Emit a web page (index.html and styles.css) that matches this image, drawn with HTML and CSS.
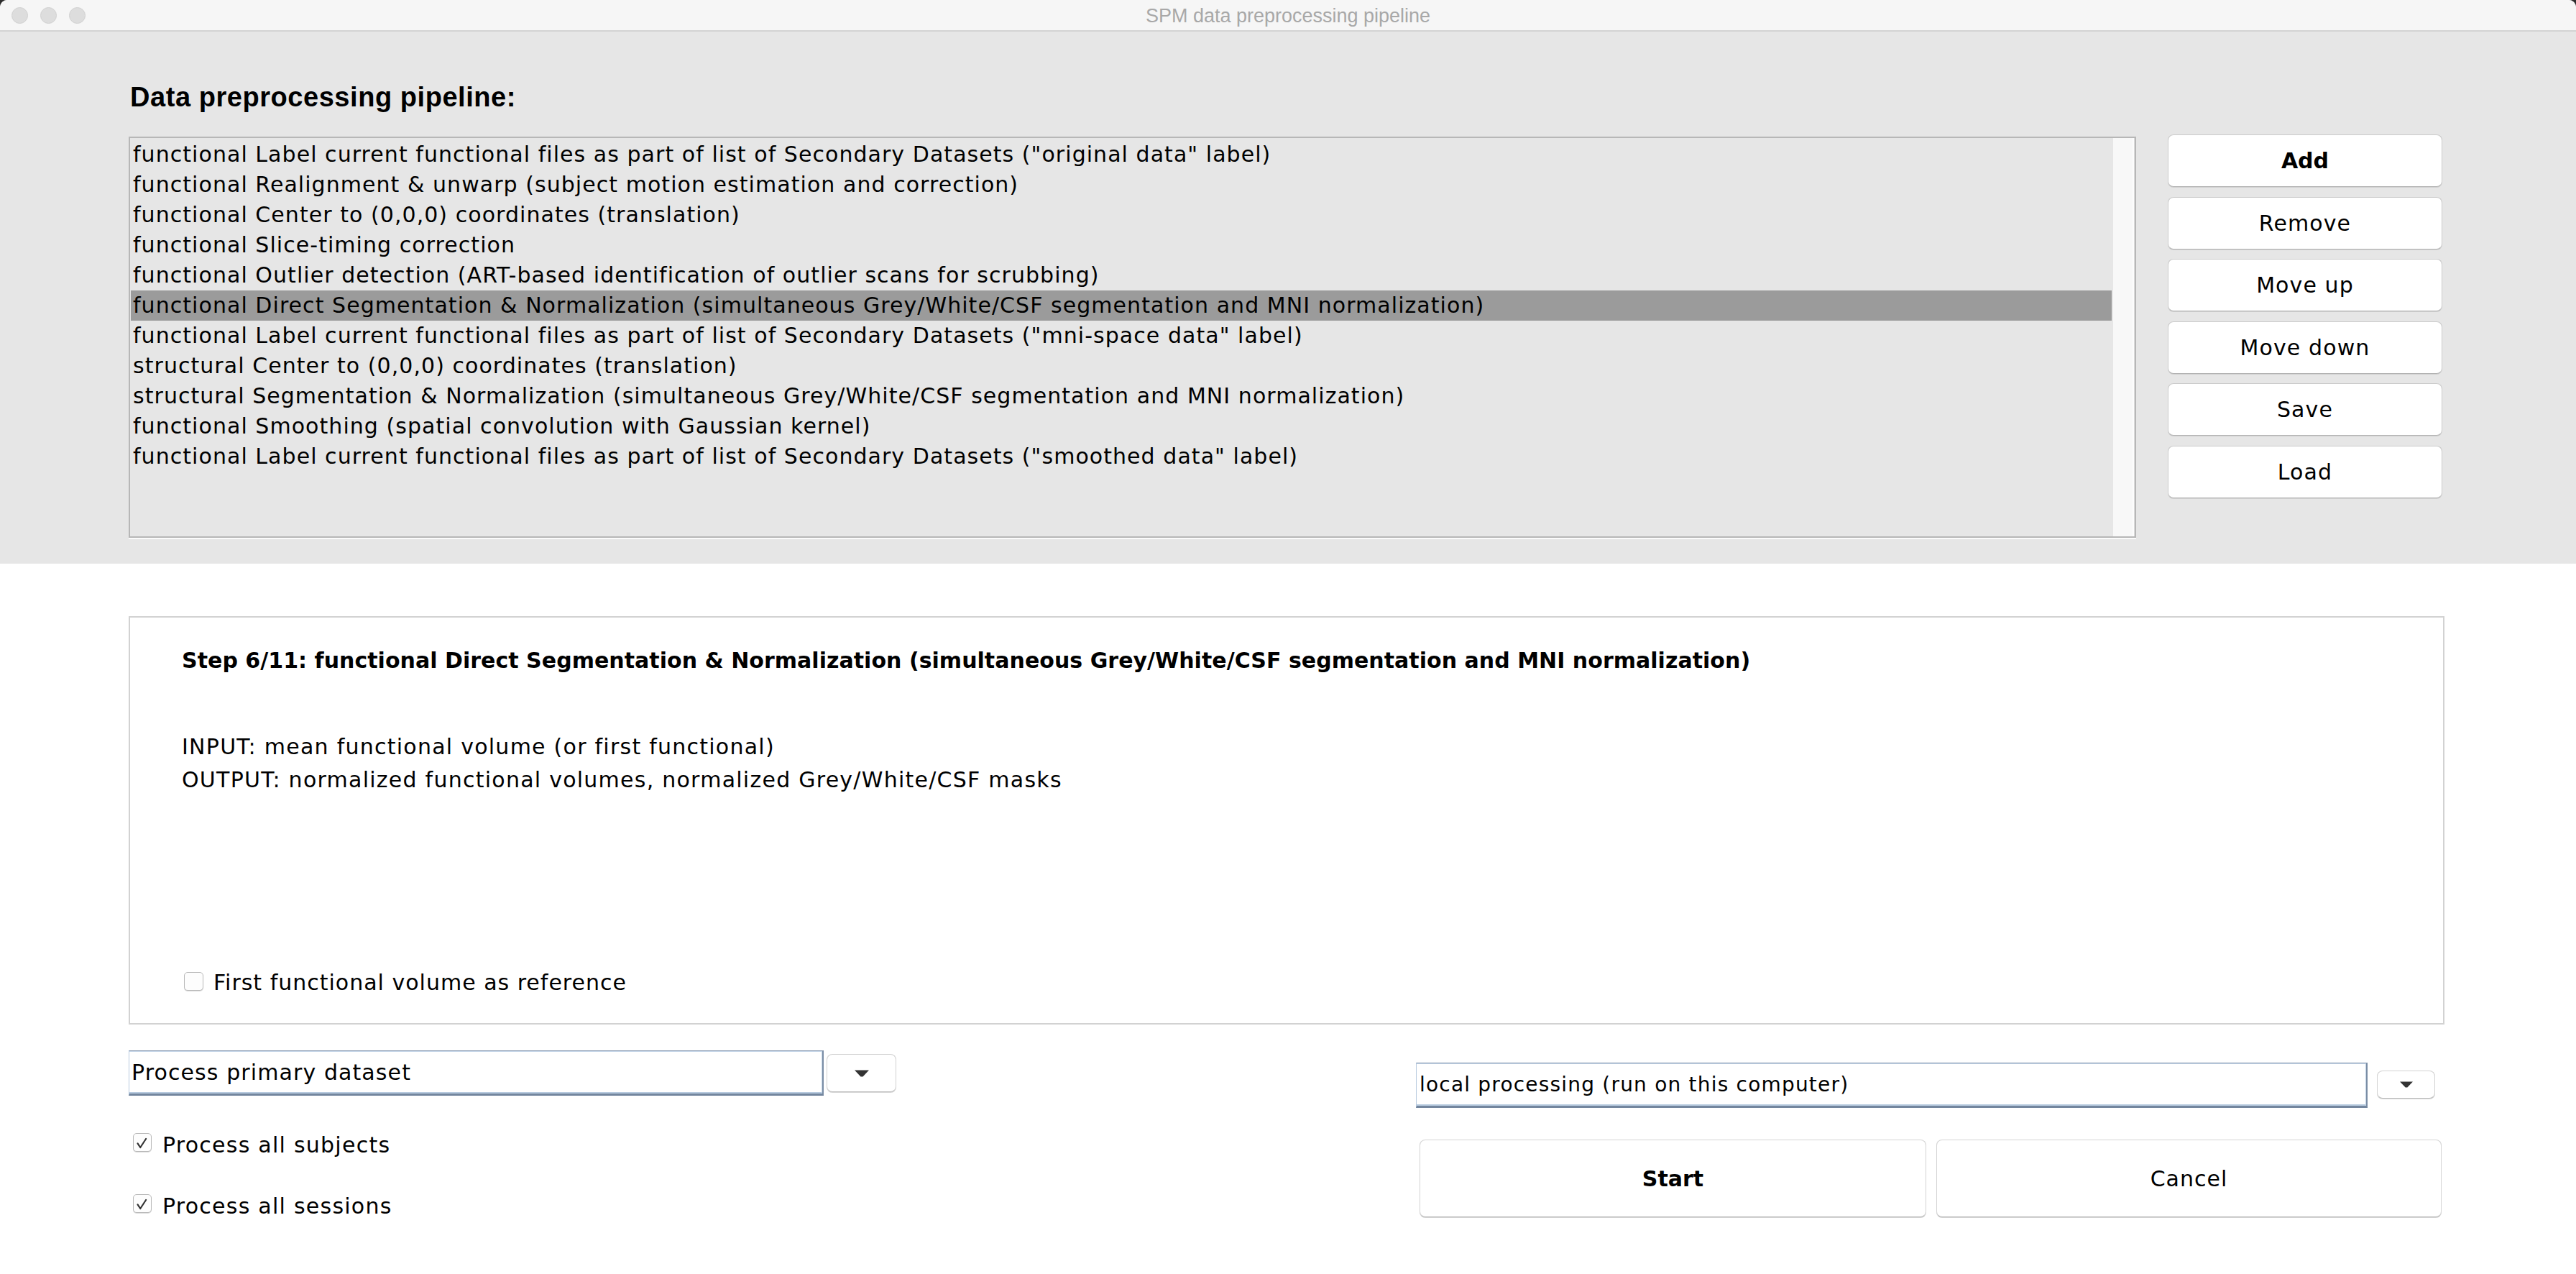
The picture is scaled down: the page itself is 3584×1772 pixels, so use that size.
FILE: index.html
```html
<!DOCTYPE html>
<html lang="en">
<head>
<meta charset="utf-8">
<title>SPM data preprocessing pipeline</title>
<link rel="stylesheet" href="styles.css">
</head>
<body>
<div class="window">
  <div class="titlebar">
    <div class="lights">
      <span class="light"></span><span class="light"></span><span class="light"></span>
    </div>
    <div class="title">SPM data preprocessing pipeline</div>
    <div class="titlebar-spacer"></div>
  </div>

  <div class="top-panel">
    <h1 class="panel-heading">Data preprocessing pipeline:</h1>
    <div class="pipeline-row">
      <div class="listbox">
        <div class="list-items">
          <div class="list-row">functional Label current functional files as part of list of Secondary Datasets ("original data" label)</div>
          <div class="list-row">functional Realignment &amp; unwarp (subject motion estimation and correction)</div>
          <div class="list-row">functional Center to (0,0,0) coordinates (translation)</div>
          <div class="list-row">functional Slice-timing correction</div>
          <div class="list-row">functional Outlier detection (ART-based identification of outlier scans for scrubbing)</div>
          <div class="list-row selected">functional Direct Segmentation &amp; Normalization (simultaneous Grey/White/CSF segmentation and MNI normalization)</div>
          <div class="list-row">functional Label current functional files as part of list of Secondary Datasets ("mni-space data" label)</div>
          <div class="list-row">structural Center to (0,0,0) coordinates (translation)</div>
          <div class="list-row">structural Segmentation &amp; Normalization (simultaneous Grey/White/CSF segmentation and MNI normalization)</div>
          <div class="list-row">functional Smoothing (spatial convolution with Gaussian kernel)</div>
          <div class="list-row">functional Label current functional files as part of list of Secondary Datasets ("smoothed data" label)</div>
        </div>
        <div class="scrolltrack"></div>
      </div>
      <div class="side-buttons">
        <button class="side-btn bold">Add</button>
        <button class="side-btn">Remove</button>
        <button class="side-btn">Move up</button>
        <button class="side-btn">Move down</button>
        <button class="side-btn">Save</button>
        <button class="side-btn">Load</button>
      </div>
    </div>
  </div>

  <div class="bottom-panel">
    <div class="step-box">
      <div class="step-title">Step 6/11: functional Direct Segmentation &amp; Normalization (simultaneous Grey/White/CSF segmentation and MNI normalization)</div>
      <div class="step-desc">
        <div>INPUT: mean functional volume (or first functional)</div>
        <div>OUTPUT: normalized functional volumes, normalized Grey/White/CSF masks</div>
      </div>
      <div class="check-row step-check">
        <span class="checkbox"></span>
        <span class="check-label">First functional volume as reference</span>
      </div>
    </div>

    <div class="controls">
      <div class="controls-left">
        <div class="combo-row">
          <div class="combo combo-lg">Process primary dataset</div>
          <button class="arrow-btn arrow-lg">
            <svg class="arrow-icon" width="20" height="10" viewBox="0 0 20 10"><polygon points="0,0.5 20,0.5 11.5,9.5 8.5,9.5" fill="#333"/></svg>
          </button>
        </div>
        <div class="check-row opt-check first">
          <span class="checkbox checked">
            <svg width="26" height="26" viewBox="0 0 26 26"><polyline points="6,13.5 10,19.5 18.5,6.5" fill="none" stroke="#333" stroke-width="2.4" stroke-linecap="round" stroke-linejoin="round"/></svg>
          </span>
          <span class="check-label">Process all subjects</span>
        </div>
        <div class="check-row opt-check second">
          <span class="checkbox checked">
            <svg width="26" height="26" viewBox="0 0 26 26"><polyline points="6,13.5 10,19.5 18.5,6.5" fill="none" stroke="#333" stroke-width="2.4" stroke-linecap="round" stroke-linejoin="round"/></svg>
          </span>
          <span class="check-label">Process all sessions</span>
        </div>
      </div>

      <div class="controls-right">
        <div class="combo-row right">
          <div class="combo combo-sm">local processing (run on this computer)</div>
          <button class="arrow-btn arrow-sm">
            <svg class="arrow-icon" width="18" height="9" viewBox="0 0 18 9"><polygon points="0,0.5 18,0.5 10.3,8.5 7.7,8.5" fill="#333"/></svg>
          </button>
        </div>
        <div class="action-buttons">
          <button class="action-btn start bold">Start</button>
          <button class="action-btn cancel">Cancel</button>
        </div>
      </div>
    </div>
  </div>
</div>
</body>
</html>
```

FILE: styles.css
```css
* {
  box-sizing: border-box;
}

html {
  background: #2e2e2e;
}

body {
  margin: 0;
  font-family: "DejaVu Sans", "Liberation Sans", sans-serif;
  color: #000;
}

.window {
  width: 3584px;
  height: 1772px;
  background: #fff;
  border-radius: 10px 10px 0 0;
  overflow: hidden;
  display: flex;
  flex-direction: column;
}

/* ---------- title bar ---------- */
.titlebar {
  height: 44px;
  flex: none;
  background: #f6f6f6;
  border-bottom: 2px solid #d3d3d3;
  display: grid;
  grid-template-columns: 1fr auto 1fr;
  align-items: center;
}

.lights {
  display: flex;
  gap: 17px;
  padding-left: 16px;
  padding-bottom: 1px;
}

.light {
  width: 23px;
  height: 23px;
  border-radius: 50%;
  background: #dddddd;
  border: 1px solid #d0d0d0;
}

.title {
  font-family: "Liberation Sans", Arial, sans-serif;
  font-size: 27px;
  line-height: 42px;
  color: #a8a8a8;
  padding-top: 1px;
}

/* ---------- top panel ---------- */
.top-panel {
  flex: none;
  height: 740px;
  background: #e6e6e6;
  padding: 69px 0 0 179px;
}

.panel-heading {
  margin: 0 0 30px 2px;
  font-family: "Liberation Sans", Arial, sans-serif;
  font-weight: bold;
  font-size: 38px;
  line-height: 44px;
  letter-spacing: 0.55px;
}

.pipeline-row {
  display: flex;
  align-items: flex-start;
  gap: 44px;
}

.listbox {
  width: 2793px;
  height: 558px;
  margin-top: 3px;
  border: 2px solid #b7b7b7;
  box-shadow: 0 2px 0 #fbfbfb;
  background: #e6e6e6;
  display: flex;
}

.list-items {
  flex: 1;
  padding: 2px 0 0 1px;
  overflow: hidden;
}

.list-row {
  height: 42px;
  line-height: 42px;
  padding-left: 3px;
  font-size: 30px;
  letter-spacing: 1.05px;
  white-space: nowrap;
}

.list-row.selected {
  background: #9b9b9b;
}

.scrolltrack {
  width: 30px;
  margin-left: 2px;
  background: #f8f8f8;
  border-right: 1px solid #dedede;
  box-shadow: inset -2px 0 0 #fdfdfd;
}

.side-buttons {
  width: 382px;
  display: flex;
  flex-direction: column;
  gap: 13.6px;
}

.side-btn {
  height: 73px;
  background: #fff;
  border: 1px solid #cbcbcb;
  border-bottom-color: #b3b3b3;
  border-radius: 8px;
  box-shadow: 0 1px 0 #cfcfcf;
  font-family: "DejaVu Sans", "Liberation Sans", sans-serif;
  font-size: 30px;
  letter-spacing: 1.1px;
  color: #000;
  padding: 0;
}

.bold {
  font-weight: bold;
  letter-spacing: 0;
}

/* ---------- bottom panel ---------- */
.bottom-panel {
  flex: 1;
  background: #fff;
  padding: 73px 183px 0 179px;
}

.step-box {
  height: 568px;
  border: 2px solid #d2d2d2;
  padding: 42px 0 38px 72px;
  display: flex;
  flex-direction: column;
}

.step-title {
  font-weight: bold;
  font-size: 30px;
  line-height: 36px;
  letter-spacing: 0.03px;
  white-space: nowrap;
}

.step-desc {
  margin-top: 79px;
  font-size: 30px;
  line-height: 45.5px;
  letter-spacing: 1.25px;
}

.check-row {
  display: flex;
  align-items: flex-start;
  font-size: 30px;
  line-height: 36px;
  letter-spacing: 1px;
}

.opt-check {
  letter-spacing: 1.25px;
}

.step-check {
  margin-top: auto;
}

.checkbox {
  flex: none;
  width: 27px;
  height: 26px;
  border: 1px solid #b8b8b8;
  border-radius: 5px;
  background: #fdfdfd;
  box-shadow: 0 1px 0 #dcdcdc;
}

.step-check .checkbox {
  margin: 2.5px 14px 0 3px;
}

.checkbox.checked {
  width: 26px;
  height: 26px;
  display: flex;
}

.opt-check .checkbox {
  margin: 1.5px 15px 0 6px;
}

.controls {
  margin-top: 36px;
  display: flex;
  justify-content: space-between;
  align-items: flex-start;
}

.controls-left {
  display: flex;
  flex-direction: column;
}

.combo-row {
  display: flex;
  align-items: center;
}

.combo {
  height: 63px;
  display: flex;
  align-items: center;
  background: #fff;
  border-style: solid;
  border-color: #8597ae #7a8da5 #73869e #b7cadf;
  border-width: 1px 2px 3px 1px;
  box-shadow: inset 0 1px 0 #c4d5e7, inset -1px 0 0 #c4d5e7, inset 0 -2px 0 #b7cadf;
  white-space: nowrap;
}

.combo-lg {
  width: 967px;
  padding-left: 3px;
  font-size: 30px;
  letter-spacing: 1.1px;
}

.combo-sm {
  width: 1324px;
  padding-left: 4px;
  font-size: 28px;
  letter-spacing: 1.2px;
}

.arrow-btn {
  background: #fff;
  border: 1px solid #d2d2d2;
  border-bottom-color: #bdbdbd;
  border-radius: 8px;
  box-shadow: 0 1px 0 #d6d6d6;
  display: flex;
  align-items: center;
  justify-content: center;
  padding: 0;
}

.arrow-lg {
  width: 97px;
  height: 53px;
  margin-left: 4px;
}

.arrow-sm {
  width: 81px;
  height: 39px;
  margin-left: 13px;
  margin-top: -3px;
}

.arrow-icon {
  display: block;
}

.opt-check.first {
  margin-top: 50.6px;
}

.opt-check.second {
  margin-top: 49px;
}

.controls-right {
  width: 1431px;
  margin-top: 17px;
  display: flex;
  flex-direction: column;
}

.action-buttons {
  display: flex;
  gap: 14px;
  margin: 44px 0 0 5px;
}

.action-btn {
  height: 108px;
  background: #fff;
  border: 1px solid #d4d4d4;
  border-bottom-color: #b9b9b9;
  border-radius: 8px;
  box-shadow: 0 1px 0 #d2d2d2;
  font-family: "DejaVu Sans", "Liberation Sans", sans-serif;
  font-size: 30px;
  letter-spacing: 1px;
  color: #000;
  padding: 0;
}

.action-btn.start {
  width: 705px;
  letter-spacing: 0;
}

.action-btn.cancel {
  width: 703px;
}
```
